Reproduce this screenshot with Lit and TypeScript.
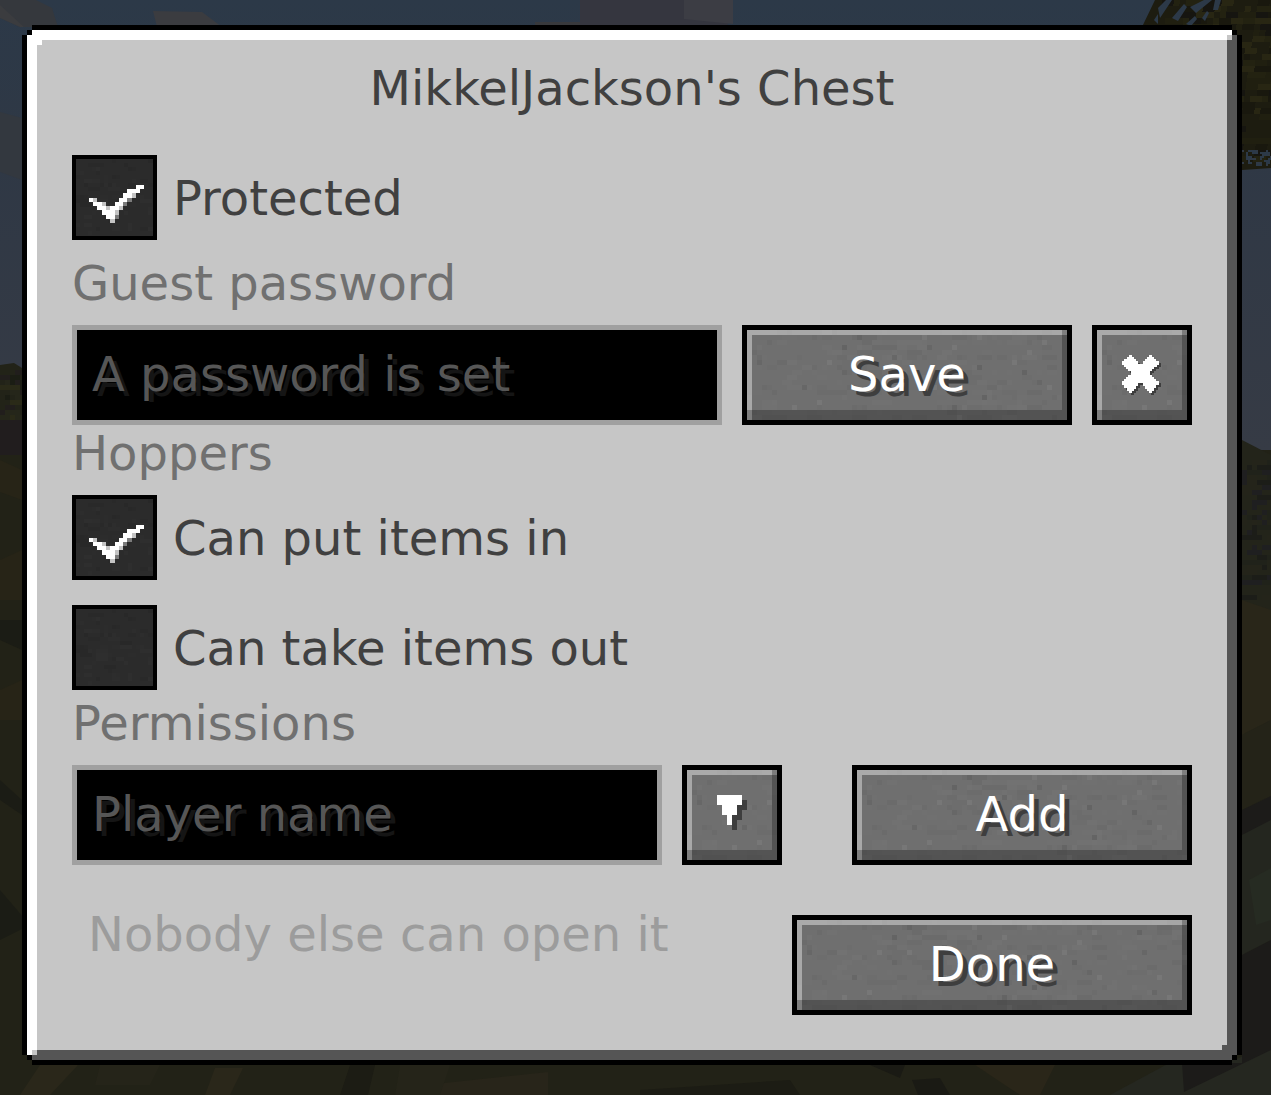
import { LitElement, html, svg, css, nothing } from "lit";
import { customElement, state } from "lit/decorators.js";

type Cell = { x: number; y: number; w: number; h: number; fill: string };

// Small deterministic generator, so the stone grain is the same on every load.
function random(seed: number) {
  let s = seed;
  return () => {
    s = (s * 1664525 + 1013904223) % 4294967296;
    return s / 4294967296;
  };
}

function grain(seed: number, cols: number, rows: number, count: number, size: number, fills: string[]): Cell[] {
  const next = random(seed);
  return Array.from({ length: count }, () => ({
    x: Math.floor(next() * cols) * size,
    y: Math.floor(next() * rows) * size,
    w: size * (1 + Math.floor(next() * 3)),
    h: size,
    fill: fills[Math.floor(next() * fills.length)],
  }));
}

const STONE = grain(7, 78, 18, 300, 5, ["#717171", "#6c6c6c", "#707070", "#6d6d6d", "#727272", "#6b6b6b"]);
const STONE_SPOTS = grain(21, 78, 18, 34, 5, ["#777777", "#646464", "#676767"]).map((c) => ({ ...c, w: 5 }));
const SLATE = grain(5, 19, 19, 75, 4, ["#2d2d2d", "#292929", "#2e2e2e", "#282828", "#2c2c2c"]);
const LEAVES = grain(11, 22, 27, 330, 6, ["#232211", "#19180e", "#201f10", "#161510", "#282613"]);
const LEAF_EDGE = grain(17, 15, 8, 36, 2, ["#2c3948", "#303944"]);
const BUSH = grain(3, 6, 16, 70, 5, ["#25261a", "#1b1d14", "#2a2a18", "#211e1c"]);
const SHRUBS = grain(9, 6, 28, 80, 5, ["#20221a", "#1c1d18", "#24241a", "#1f1f20"]);

const cells = (list: Cell[]) =>
  list.map((c) => svg`<rect x=${c.x} y=${c.y} width=${c.w} height=${c.h} fill=${c.fill}></rect>`);

// Tick drawn on a 20 x 20 grid: column, row, length, shade.
const TICK: [number, number, number, string][] = [
  [15, 7, 2, "#fff"], [13, 8, 3, "#fff"], [12, 9, 2, "#fff"], [14, 9, 1, "#c4c4c4"],
  [4, 10, 1, "#fff"], [5, 10, 1, "#c4c4c4"], [11, 10, 2, "#fff"], [13, 10, 1, "#7c7c7c"],
  [5, 11, 2, "#fff"], [7, 11, 1, "#c4c4c4"], [10, 11, 2, "#fff"], [12, 11, 1, "#7c7c7c"],
  [6, 12, 2, "#fff"], [8, 12, 1, "#c4c4c4"], [9, 12, 2, "#fff"], [11, 12, 1, "#c4c4c4"],
  [7, 13, 3, "#fff"], [10, 13, 1, "#c4c4c4"], [8, 14, 2, "#fff"], [10, 14, 1, "#7c7c7c"],
  [9, 15, 1, "#c4c4c4"],
];

const CROSS =
  "7,0 10,0 10,2 12,2 12,4 14,4 14,6 16,6 16,9 21,9 21,6 23,6 23,4 25,4 25,2 27,2 27,0 30,0 30,2 32,2 32,4 34,4 34,6 37,6 37,10 35,10 35,12 32,12 32,14 30,14 30,16 28,16 28,20 30,20 30,22 32,22 32,24 34,24 34,26 37,26 37,30 34,30 34,33 32,33 32,36 30,36 30,38 27,38 27,36 25,36 25,34 23,34 23,31 21,31 21,28 16,28 16,31 14,31 14,34 12,34 12,36 10,36 10,38 7,38 7,36 5,36 5,33 2,33 2,30 0,30 0,26 2,26 2,24 4,24 4,22 6,22 6,20 9,20 9,16 6,16 6,14 4,14 4,12 2,12 2,10 0,10 0,6 2,6 2,4 5,4 5,2 7,2";
const ARROW = "0,0 25,0 25,10 20,10 20,20 15,20 15,30 10,30 10,20 5,20 5,10 0,10";

@customElement("app-root")
export class AppRoot extends LitElement {
  @state() private guarded = true;
  @state() private hopperIn = true;
  @state() private hopperOut = false;

  static styles = css`
    :host {
      display: block;
      position: relative;
      min-height: 100vh;
      overflow: hidden;
      background: #222217;
      font-family: "DejaVu Sans", sans-serif;
      font-size: 48px;
      line-height: 50px;
      color: #404040;
    }
    * {
      box-sizing: border-box;
    }
    .scene {
      position: absolute;
      inset: 0;
      width: 100%;
      height: 100%;
    }
    .defs {
      position: absolute;
      width: 0;
      height: 0;
    }
    .panel {
      position: relative;
      margin: 25px 29px 30px 22px;
      padding: 38px 50px 50px;
      clip-path: polygon(
        10px 0, calc(100% - 10px) 0, calc(100% - 10px) 5px, calc(100% - 5px) 5px,
        calc(100% - 5px) 10px, 100% 10px, 100% calc(100% - 10px),
        calc(100% - 5px) calc(100% - 10px), calc(100% - 5px) calc(100% - 5px),
        calc(100% - 10px) calc(100% - 5px), calc(100% - 10px) 100%, 10px 100%,
        10px calc(100% - 5px), 5px calc(100% - 5px), 5px calc(100% - 10px),
        0 calc(100% - 10px), 0 10px, 5px 10px, 5px 5px, 10px 5px
      );
      background:
        linear-gradient(#fff, #fff) left 15px top 15px / 5px 5px,
        linear-gradient(#555, #555) right 15px bottom 15px / 5px 5px,
        linear-gradient(#c6c6c6, #c6c6c6) right 10px top 10px / 5px 5px,
        linear-gradient(#c6c6c6, #c6c6c6) left 10px bottom 10px / 5px 5px,
        linear-gradient(#fff, #fff) 10px 5px / calc(100% - 20px) 10px,
        linear-gradient(#fff, #fff) 5px 10px / 10px calc(100% - 20px),
        linear-gradient(#555, #555) right 5px top 10px / 10px calc(100% - 20px),
        linear-gradient(#555, #555) left 10px bottom 5px / calc(100% - 20px) 10px,
        linear-gradient(#c6c6c6, #c6c6c6) 15px 15px / calc(100% - 30px) calc(100% - 30px),
        #000;
      background-repeat: no-repeat;
    }
    .title {
      margin: 0 0 42px;
      font-size: inherit;
      font-weight: 400;
      text-align: center;
    }
    .heading {
      display: block;
      margin: 0 0 17px;
      font-size: inherit;
      font-weight: 400;
      color: #707070;
    }
    .guest {
      margin-top: 18px;
    }
    .hoppers {
      margin-top: 3px;
    }
    .permissions {
      margin-top: 8px;
    }
    .option {
      display: flex;
      align-items: center;
      gap: 16px;
      width: fit-content;
    }
    .option + .option {
      margin-top: 25px;
    }
    .box {
      display: grid;
      width: 85px;
      height: 85px;
      border: 4px solid #000;
      background: #2b2b2b;
    }
    .box > * {
      grid-area: 1 / 1;
      width: 77px;
      height: 77px;
      margin: 0;
    }
    .box input {
      appearance: none;
      outline: none;
      cursor: pointer;
    }
    .box svg {
      pointer-events: none;
    }
    .row {
      display: flex;
      gap: 20px;
    }
    .field {
      flex: 1;
      min-width: 0;
      height: 100px;
      padding: 0 15px 2px;
      border: 5px solid #a0a0a0;
      border-radius: 0;
      outline: none;
      background: #000;
      color: #e0e0e0;
      font: inherit;
      text-shadow: 5px 5px #383838;
    }
    .field::placeholder {
      color: #565656;
      opacity: 1;
      text-shadow: 5px 5px #151515;
    }
    .button {
      position: relative;
      display: flex;
      align-items: center;
      justify-content: center;
      flex: none;
      height: 100px;
      padding: 0;
      border: 5px solid #000;
      border-radius: 0;
      background: #6f6f6f;
      color: #fff;
      font: inherit;
      text-shadow: 5px 5px #3e3e3e;
      cursor: pointer;
    }
    .stone {
      position: absolute;
      inset: 0;
      width: 100%;
      height: 100%;
    }
    .caption,
    .icon {
      position: relative;
    }
    .caption {
      padding-bottom: 2px;
    }
    .square {
      width: 100px;
    }
    .save {
      width: 330px;
    }
    .add {
      width: 340px;
      margin-left: 50px;
    }
    .done {
      width: 400px;
    }
    .footer {
      display: flex;
      justify-content: space-between;
      align-items: flex-start;
      margin-top: 50px;
    }
    .note {
      margin: 0;
      padding-left: 16px;
      line-height: 38px;
      color: #9c9c9c;
    }
  `;

  private stone() {
    return html`<svg class="stone" aria-hidden="true" shape-rendering="crispEdges">
      <rect width="100%" height="100%" fill="url(#stone)"></rect>
      <rect width="100%" height="5" fill="#fff" fill-opacity="0.4"></rect>
      <rect y="5" width="5" height="100%" fill="#fff" fill-opacity="0.4"></rect>
      <rect x="100%" width="5" height="80" transform="translate(-5 0)" fill-opacity="0.25"></rect>
      <rect y="80" width="100%" height="10" fill-opacity="0.25"></rect>
    </svg>`;
  }

  private option(id: string, text: string, checked: boolean, change: (on: boolean) => void) {
    return html`<div class="option">
      <span class="box">
        <svg viewBox="0 0 77 77" aria-hidden="true" shape-rendering="crispEdges">${cells(SLATE)}</svg>
        <input id=${id} type="checkbox" .checked=${checked}
          @change=${(e: Event) => change((e.target as HTMLInputElement).checked)} />
        ${checked
          ? html`<svg viewBox="1 1 18 18" aria-hidden="true" shape-rendering="crispEdges">
              ${TICK.map(([x, y, w, fill]) => svg`<rect x=${x} y=${y} width=${w} height="1" fill=${fill}></rect>`)}
            </svg>`
          : nothing}
      </span>
      <label for=${id}>${text}</label>
    </div>`;
  }

  private scene() {
    return html`<svg class="scene" viewBox="0 0 1271 1095" preserveAspectRatio="none" aria-hidden="true">
      <defs>
        <linearGradient id="sky" x1="0" y1="0" x2="0" y2="1">
          <stop offset="0" stop-color="#2c3948"></stop>
          <stop offset="0.35" stop-color="#2f3845"></stop>
          <stop offset="1" stop-color="#363b45"></stop>
        </linearGradient>
      </defs>
      <rect width="1271" height="450" fill="url(#sky)"></rect>
      <path d="M0 0H36L52 8L58 27H20L0 18Z" fill="#35383d"></path>
      <path d="M0 5L24 27H20L0 18Z" fill="#3b3c3f"></path>
      <path d="M153 11L202 12L222 27H157Z" fill="#3b3c40"></path>
      <path d="M0 112L22 118V180L0 172Z" fill="#33383f"></path>
      <path d="M580 0H733L727 27H580Z" fill="#35363f"></path>
      <path d="M684 0H733V24L684 19Z" fill="#3c3d44"></path>
      <path d="M535 22H580V27H535Z" fill="#38393c"></path>
      <path d="M1155 0H1271V168L1242 170V60L1142 27Z" fill="#1d1c10"></path>
      <g transform="translate(1150 0) skewX(-8)" shape-rendering="crispEdges">${cells(LEAVES.filter((c) => c.x > 6 && (c.y < 30 || c.x > 80)))}</g>
      <g transform="translate(1242 150)" shape-rendering="crispEdges">${cells(LEAF_EDGE)}</g>
      <path d="M1158 8l8 -8h6l-12 18zM1172 18l12 -14l3 3l-9 14zM1190 7l14 -7h8l-16 13zM1215 0h6l-3 10h-5zM1154 20l4 -6v10zM1186 24l9 -8l2 3l-6 7zM1202 18l5 -7l2 2l-4 8z" fill="#2c3948"></path>
      <path d="M0 365L14 363L22 368V1095H0Z" fill="#222318"></path>
      <g transform="translate(0 370)" shape-rendering="crispEdges">${cells(BUSH.filter((c) => c.x < 20))}</g>
      <path d="M0 450H1242V1095H0Z" fill="#222217"></path>
      <path d="M0 420H22V455H0Z" fill="#211d1e"></path>
      <path d="M0 460L22 470V500L0 492ZM0 560L22 550V600H0ZM0 690L22 680V720H0Z" fill="#272417"></path>
      <path d="M0 620H22V650L0 640ZM0 780L22 800V815L0 800ZM0 890L30 925L0 940Z" fill="#1b1c15"></path>
      <path d="M1242 440L1271 455V1095H1242Z" fill="#23241a"></path>
      <g transform="translate(1242 460)" shape-rendering="crispEdges">${cells(SHRUBS)}</g>
      <path d="M1242 600L1271 610V720L1242 735Z" fill="#292619"></path>
      <path d="M1242 735L1271 720V796L1242 810Z" fill="#242318"></path>
      <path d="M1242 810L1271 796V825L1242 835Z" fill="#1c1b19"></path>
      <path d="M1242 835L1271 820V940L1242 955Z" fill="#24261f"></path>
      <path d="M1249 880L1271 868V920L1256 925Z" fill="#262b22"></path>
      <path d="M1175 1060H1235L1271 1042V1095H1110Z" fill="#252720"></path>
      <path d="M1242 955L1271 940V1050L1184 1092L1182 1063H1242Z" fill="#1c1b19"></path>
      <path d="M40 1065H78L50 1095H20ZM215 1068H243L230 1095H205Z" fill="#2a271a"></path>
      <path d="M435 1084L548 1072V1095H435ZM520 1078H547V1095H520Z" fill="#28251a"></path>
      <path d="M100 1065H160L150 1085H95ZM400 1065H450L440 1095H395Z" fill="#252419"></path>
      <path d="M640 1090L790 1080L800 1095H640ZM350 1065H375L368 1095H340Z" fill="#1c1c14"></path>
      <path d="M975 1065H1055L1040 1095H1020Z" fill="#2a2619"></path>
      <path d="M912 1080L940 1078L950 1095H918ZM870 1065H905L900 1078Z" fill="#1a1a14"></path>
    </svg>`;
  }

  render() {
    return html`
      ${this.scene()}
      <svg class="defs" aria-hidden="true">
        <defs>
          <pattern id="stone" width="390" height="90" patternUnits="userSpaceOnUse">
            <rect width="390" height="90" fill="#6f6f6f"></rect>
            ${cells(STONE)}${cells(STONE_SPOTS)}
          </pattern>
        </defs>
      </svg>
      <main class="panel">
        <h1 class="title">MikkelJackson's Chest</h1>
        ${this.option("protected", "Protected", this.guarded, (on) => (this.guarded = on))}

        <label class="heading guest" for="password">Guest password</label>
        <div class="row">
          <input class="field" id="password" type="text" placeholder="A password is set" />
          <button class="button save" type="button">${this.stone()}<span class="caption">Save</span></button>
          <button class="button square" type="button" aria-label="Clear password">
            ${this.stone()}
            <svg class="icon" width="40" height="40" viewBox="0 0 40 40" shape-rendering="crispEdges">
              <polygon points=${CROSS} transform="translate(2 2)" fill="#3e3e3e"></polygon>
              <polygon points=${CROSS} fill="#fff"></polygon>
            </svg>
          </button>
        </div>

        <h2 class="heading hoppers">Hoppers</h2>
        ${this.option("hopper-in", "Can put items in", this.hopperIn, (on) => (this.hopperIn = on))}
        ${this.option("hopper-out", "Can take items out", this.hopperOut, (on) => (this.hopperOut = on))}

        <label class="heading permissions" for="player">Permissions</label>
        <div class="row">
          <input class="field" id="player" type="text" placeholder="Player name" />
          <button class="button square" type="button" aria-label="Show players">
            ${this.stone()}
            <svg class="icon" width="30" height="40" viewBox="0 0 30 40" shape-rendering="crispEdges">
              <polygon points=${ARROW} transform="translate(5 5)" fill="#3e3e3e"></polygon>
              <polygon points=${ARROW} fill="#fff"></polygon>
            </svg>
          </button>
          <button class="button add" type="button">${this.stone()}<span class="caption">Add</span></button>
        </div>

        <div class="footer">
          <p class="note">Nobody else can open it</p>
          <button class="button done" type="button">${this.stone()}<span class="caption">Done</span></button>
        </div>
      </main>
    `;
  }
}
